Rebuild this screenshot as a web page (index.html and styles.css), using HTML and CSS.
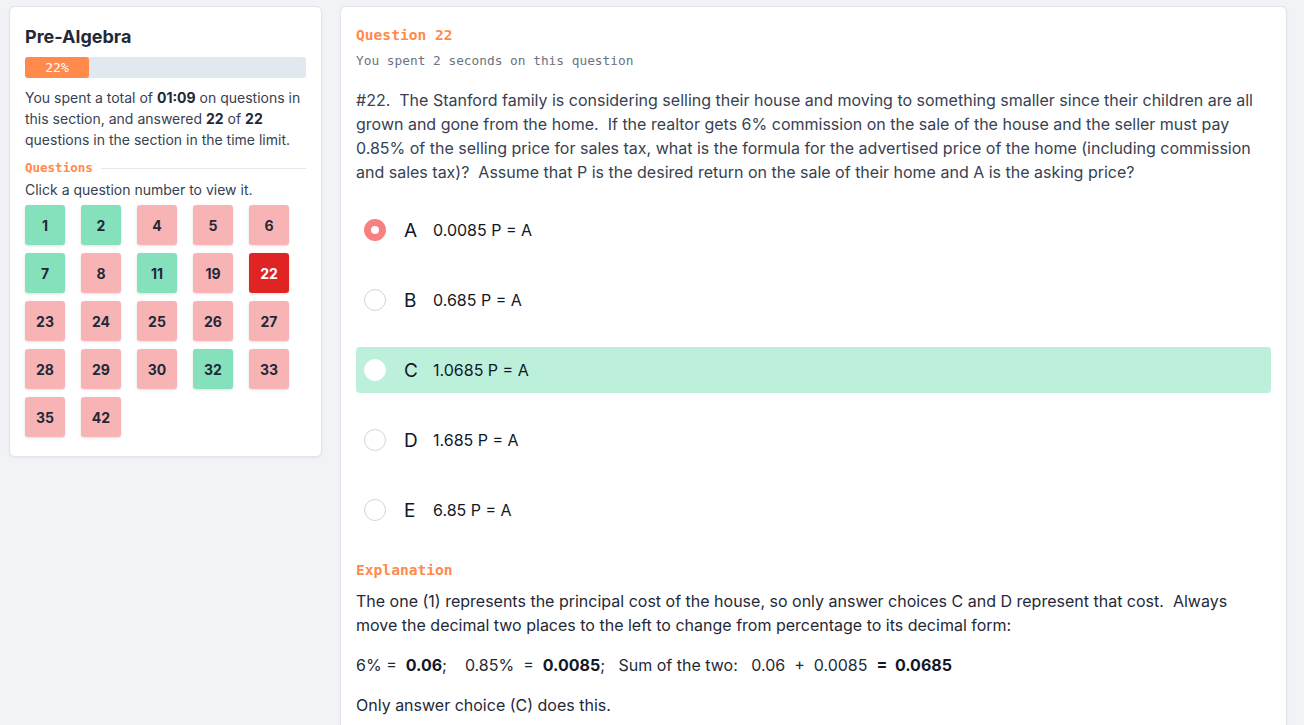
FILE: index.html
```html
<!DOCTYPE html>
<html lang="en">
<head>
    <meta charset="UTF-8">
    <meta name="viewport" content="width=device-width, initial-scale=1.0">
    <title>Pre-Algebra Review</title>
    <link rel="stylesheet" href="styles.css">
</head>
<body>
    <div class="layout">
        <div class="card sidebar">
            <h1>Pre-Algebra</h1>
            <div class="progress">
                <div class="progress-fill" style="width: 22.8%">22%</div>
            </div>
            <p class="summary">You spent a total of <strong>01:09</strong> on questions in this section, and answered <strong>22</strong> of <strong>22</strong> questions in the section in the time limit.</p>
            <div class="label-row"><span class="label">Questions</span><span class="rule"></span></div>
            <p class="hint">Click a question number to view it.</p>
            <div class="tiles">
                <a class="tile right">1</a>
                <a class="tile right">2</a>
                <a class="tile wrong">4</a>
                <a class="tile wrong">5</a>
                <a class="tile wrong">6</a>
                <a class="tile right">7</a>
                <a class="tile wrong">8</a>
                <a class="tile right">11</a>
                <a class="tile wrong">19</a>
                <a class="tile current">22</a>
                <a class="tile wrong">23</a>
                <a class="tile wrong">24</a>
                <a class="tile wrong">25</a>
                <a class="tile wrong">26</a>
                <a class="tile wrong">27</a>
                <a class="tile wrong">28</a>
                <a class="tile wrong">29</a>
                <a class="tile wrong">30</a>
                <a class="tile right">32</a>
                <a class="tile wrong">33</a>
                <a class="tile wrong">35</a>
                <a class="tile wrong">42</a>
            </div>
        </div>

        <div class="card main">
            <div class="label">Question 22</div>
            <div class="time">You spent 2 seconds on this question</div>
            <p class="question">#22.&nbsp; The Stanford family is considering selling their house and moving to something smaller since their children are all grown and gone from the home.&nbsp; If the realtor gets 6% commission on the sale of the house and the seller must pay 0.85% of the selling price for sales tax, what is the formula for the advertised price of the home (including commission and sales tax)?&nbsp; Assume that P is the desired return on the sale of their home and A is the asking price?</p>

            <div class="options">
                <div class="option"><span class="radio picked"></span><span class="letter">A</span><span class="answer">0.0085 P = A</span></div>
                <div class="option"><span class="radio"></span><span class="letter">B</span><span class="answer">0.685 P = A</span></div>
                <div class="option correct"><span class="radio"></span><span class="letter">C</span><span class="answer">1.0685 P = A</span></div>
                <div class="option"><span class="radio"></span><span class="letter">D</span><span class="answer">1.685 P = A</span></div>
                <div class="option"><span class="radio"></span><span class="letter">E</span><span class="answer">6.85 P = A</span></div>
            </div>

            <div class="label">Explanation</div>
            <div class="explanation">
                <p>The one (1) represents the principal cost of the house, so only answer choices C and D represent that cost.&nbsp; Always move the decimal two places to the left to change from percentage to its decimal form:</p>
                <p>6% =&nbsp; <strong>0.06</strong>;&nbsp;&nbsp;&nbsp; 0.85%&nbsp; =&nbsp; <strong>0.0085</strong>;&nbsp;&nbsp; Sum of the two:&nbsp;&nbsp; 0.06&nbsp; +&nbsp; 0.0085&nbsp; <strong>=&nbsp; 0.0685</strong></p>
                <p>Only answer choice (C) does this.</p>
            </div>
        </div>
    </div>
</body>
</html>
```

FILE: styles.css
```css
body {
    font-family: Inter, "Noto Sans", sans-serif;
    background-color: #f1f3f6;
    color: #1f2937;
    margin: 0;
    padding: 6px 17px 0 9px;
}
.layout {
    display: flex;
    align-items: flex-start;
    gap: 18px;
}
.card {
    background-color: #fff;
    border: 1px solid #e2e5ea;
    border-radius: 6px;
    box-shadow: 0 1px 3px rgba(0, 0, 0, 0.06);
    box-sizing: border-box;
}
.sidebar {
    width: 313px;
    padding: 18px 15px 19px;
}
.main {
    flex: 1;
    padding: 18px 15px 20px;
    min-height: 760px;
}
h1 {
    font-size: 18px;
    font-weight: 700;
    color: #1f2937;
    margin: 0 0 8px;
    line-height: 24px;
}
.progress {
    height: 21px;
    background-color: #e2e8f0;
    border-radius: 3px;
}
.progress-fill {
    height: 100%;
    background-color: #ff8a4c;
    border-radius: 3px;
    color: #fff;
    font-family: "DejaVu Sans Mono", monospace;
    font-size: 13px;
    line-height: 21px;
    text-align: center;
}
.summary {
    font-size: 14px;
    line-height: 21px;
    margin: 9px 0 8px;
    color: #374151;
}
.summary strong {
    color: #1f2937;
}
.label-row {
    display: flex;
    align-items: center;
    gap: 8px;
}
.rule {
    flex: 1;
    border-top: 1px solid #e5e7eb;
}
.label {
    font-family: "DejaVu Sans Mono", monospace;
    font-size: 12.5px;
    font-weight: 700;
    color: #ff8a4c;
    line-height: 20px;
}
.hint {
    font-size: 14px;
    line-height: 20px;
    margin: 2px 0 5px;
    color: #374151;
}
.tiles {
    display: grid;
    grid-template-columns: repeat(5, 40px);
    column-gap: 16px;
    row-gap: 8px;
}
.tile {
    width: 40px;
    height: 40px;
    display: flex;
    align-items: center;
    justify-content: center;
    border-radius: 3px;
    font-size: 14px;
    font-weight: 700;
    color: #1f2937;
    box-shadow: 0 1px 3px rgba(0, 0, 0, 0.12);
    cursor: pointer;
}
.right {
    background-color: #84e1bc;
}
.wrong {
    background-color: #f8b4b4;
}
.current {
    background-color: #e02424;
    color: #fff;
}
.main .label {
    font-size: 14.6px;
    line-height: 20px;
}
.time {
    font-family: "DejaVu Sans Mono", monospace;
    font-size: 12.8px;
    color: #6b7280;
    margin-top: 6px;
    line-height: 20px;
}
.question {
    font-size: 16px;
    line-height: 24px;
    margin: 17px 0 23px;
    color: #374151;
}
.options {
    display: flex;
    flex-direction: column;
    gap: 24px;
    margin-bottom: 27px;
}
.option {
    display: flex;
    align-items: center;
    height: 46px;
    padding-left: 8px;
    border-radius: 4px;
}
.correct {
    background-color: #bcf0da;
}
.radio {
    width: 22px;
    height: 22px;
    border-radius: 50%;
    border: 1px solid #d1d5db;
    background-color: #fff;
    box-sizing: border-box;
    margin-right: 18px;
}
.correct .radio {
    border-color: #fff;
}
.radio.picked {
    border: 7px solid #f98080;
}
.letter {
    font-size: 19px;
    width: 29px;
    color: #111827;
}
.answer {
    font-size: 16px;
    color: #111827;
}
.explanation {
    margin-top: 9px;
}
.explanation p {
    font-size: 16px;
    line-height: 24px;
    margin: 0 0 16px;
    color: #1f2937;
}
.explanation strong {
    color: #111827;
}
```
